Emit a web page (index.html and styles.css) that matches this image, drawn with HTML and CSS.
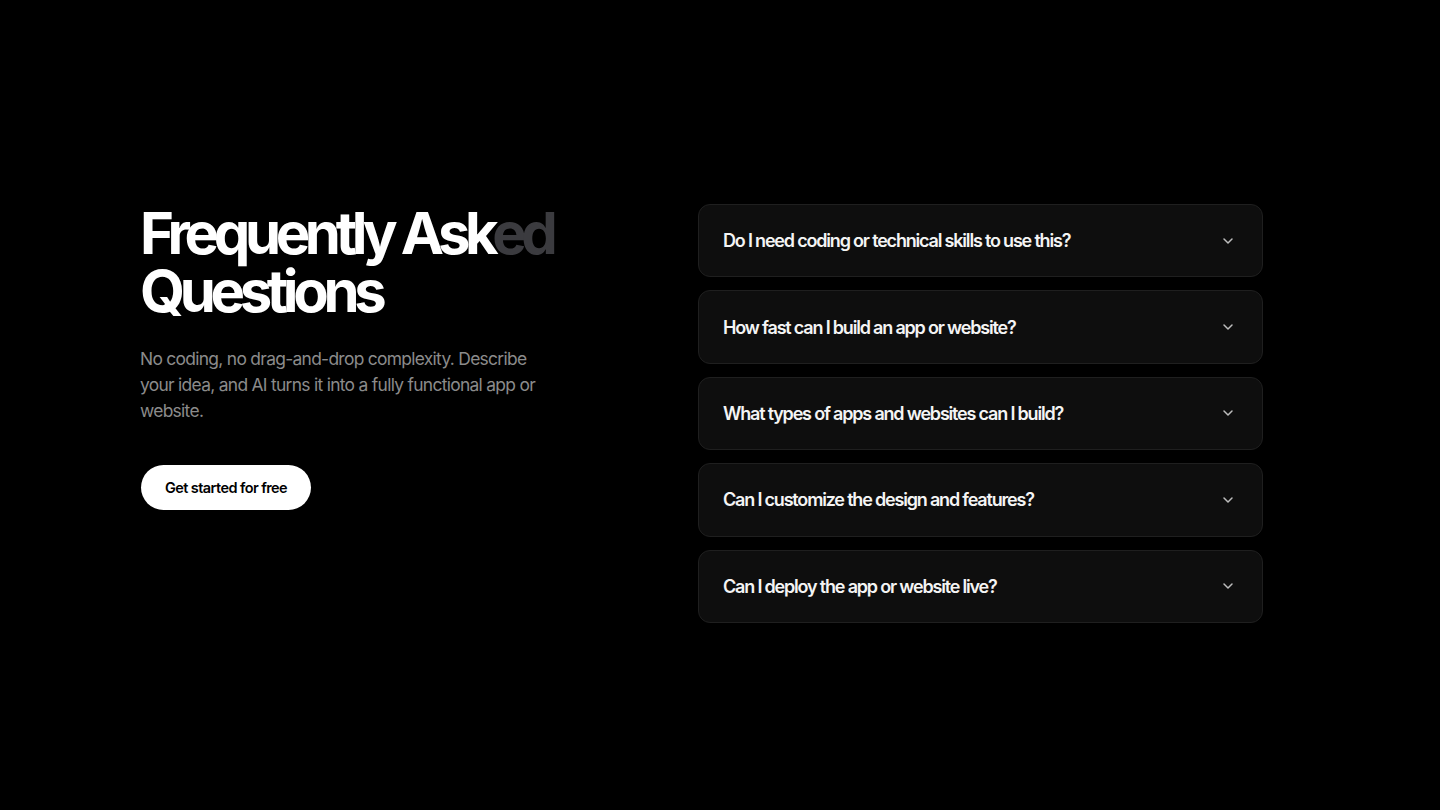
FILE: index.html
```html
<!DOCTYPE html>
<html lang="en">
<head>
<meta charset="utf-8">
<title>FAQ</title>
<link rel="stylesheet" href="styles.css">
</head>
<body>
<section class="faq">
  <div class="intro">
    <h1 class="title">Frequently Ask<span class="dim">ed</span><br>Questions</h1>
    <p class="lead">No coding, no drag-and-drop complexity. Describe your idea, and AI turns it into a fully functional app or website.</p>
    <a class="cta" href="#">Get started for free</a>
  </div>
  <div class="list">
    <div class="item"><span class="q">Do I need coding or technical skills to use this?</span><svg class="chev" viewBox="0 0 16 16"><path d="M4 6l4 4 4-4"/></svg></div>
    <div class="item"><span class="q">How fast can I build an app or website?</span><svg class="chev" viewBox="0 0 16 16"><path d="M4 6l4 4 4-4"/></svg></div>
    <div class="item"><span class="q">What types of apps and websites can I build?</span><svg class="chev" viewBox="0 0 16 16"><path d="M4 6l4 4 4-4"/></svg></div>
    <div class="item"><span class="q">Can I customize the design and features?</span><svg class="chev" viewBox="0 0 16 16"><path d="M4 6l4 4 4-4"/></svg></div>
    <div class="item"><span class="q">Can I deploy the app or website live?</span><svg class="chev" viewBox="0 0 16 16"><path d="M4 6l4 4 4-4"/></svg></div>
  </div>
</section>
</body>
</html>
```
FILE: styles.css
```css
* { box-sizing: border-box; }
html, body { margin: 0; padding: 0; background: #000; }
body {
  font-family: Inter, "Noto Sans", sans-serif;
  color: #fff;
  width: 1440px;
  height: 810px;
  overflow: hidden;
}
.faq {
  display: flex;
  align-items: flex-start;
  padding: 204px 0 0 140px;
}
.intro {
  width: 558px;
  flex: none;
}
.title {
  margin: 0;
  font-size: 58px;
  line-height: 58px;
  font-weight: 700;
  letter-spacing: -0.092em;
  color: #fff;
}
.dim { color: #3b3b3f; }
.lead {
  margin: 26px 0 0;
  width: 405px;
  font-size: 17.4px;
  line-height: 26px;
  color: #8b8b8b;
  letter-spacing: -0.04em;
}
.cta {
  display: inline-flex;
  align-items: center;
  justify-content: center;
  margin-top: 41px;
  margin-left: 1px;
  width: 170px;
  height: 45px;
  border-radius: 999px;
  background: #fff;
  color: #000;
  font-size: 14.5px;
  font-weight: 600;
  letter-spacing: -0.04em;
  text-decoration: none;
}
.list {
  width: 565px;
  display: flex;
  flex-direction: column;
  gap: 13px;
}
.item {
  height: 73.4px;
  display: flex;
  align-items: center;
  justify-content: space-between;
  padding: 0 26px 0 24px;
  background: #0e0e0e;
  border: 1px solid #1f1f1f;
  border-radius: 12px;
}
.q {
  font-size: 18px;
  font-weight: 600;
  letter-spacing: -0.066em;
  color: #f4f4f4;
}
.chev {
  width: 16px;
  height: 16px;
  fill: none;
  stroke: #bdbdbd;
  stroke-width: 1.5;
  stroke-linecap: round;
  stroke-linejoin: round;
}
```
